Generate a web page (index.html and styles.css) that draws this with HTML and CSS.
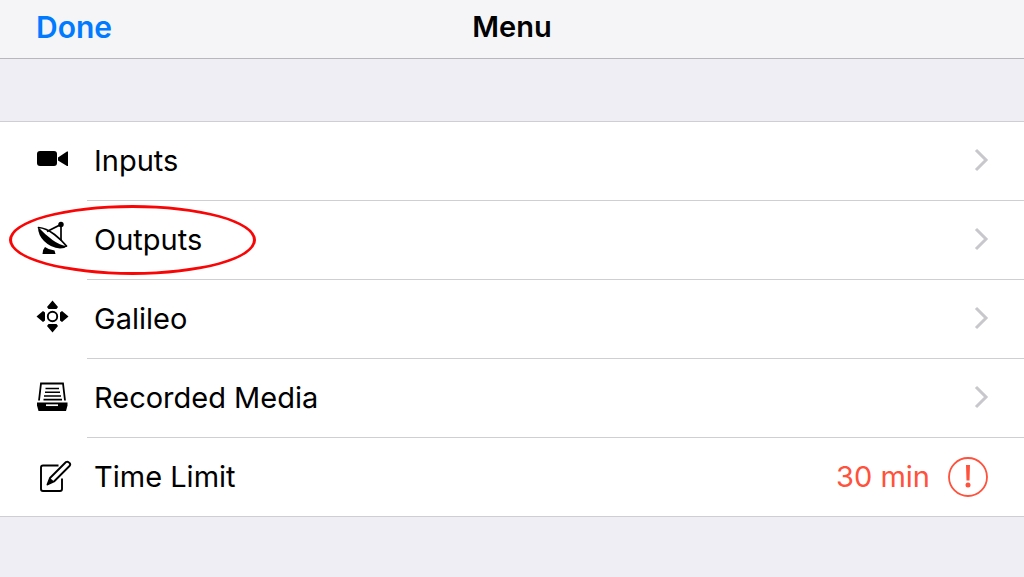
FILE: index.html
```html
<!DOCTYPE html>
<html lang="en">
<head>
<meta charset="utf-8">
<meta name="viewport" content="width=device-width, initial-scale=1">
<title>Menu</title>
<link rel="stylesheet" href="styles.css">
</head>
<body>
<header class="navbar">
  <button class="done" type="button">Done</button>
  <h1 class="title">Menu</h1>
</header>
<main>
  <ul class="menu">
    <li class="item">
      <a class="row" href="#inputs">
        <svg class="icon" viewBox="0 0 36 36" aria-hidden="true"><rect x="1" y="10" width="20" height="15" rx="3"/><path d="M22 16.500L31 10.500H32V25H31L22 19.500Z"/></svg>
        <span class="label">Inputs</span>
        <svg class="chevron" viewBox="0 0 16 24" aria-hidden="true"><path d="M2 2L12 12L2 22"/></svg>
      </a>
    </li>
    <li class="item marked">
      <a class="row" href="#outputs">
        <svg class="icon" viewBox="0 0 36 36" aria-hidden="true"><path d="M2 7Q2 15 8 21Q15 28 24 28.500Q29 28.500 31 26Q24 25.500 16.500 20Q9 14.500 2 7Z"/><path d="M2.500 7.500Q10 8 18.500 14.500Q25 19.500 30.500 26" fill="none" stroke="#000" stroke-width="1.700" stroke-linecap="round"/><path d="M11 11.500L25 4.500V20.500" fill="none" stroke="#000" stroke-width="1.700"/><circle cx="25" cy="4.500" r="2.700"/><path d="M9 27Q13 30 18.500 30.500L19.500 34H6.500Q6.500 29.500 9 27Z"/></svg>
        <span class="label">Outputs</span>
        <svg class="chevron" viewBox="0 0 16 24" aria-hidden="true"><path d="M2 2L12 12L2 22"/></svg>
      </a>
    </li>
    <li class="item">
      <a class="row" href="#galileo">
        <svg class="icon" viewBox="0 -1 36 36" aria-hidden="true"><circle cx="16.500" cy="16.500" r="4.700" fill="none" stroke="#000" stroke-width="1.900"/><path d="M16.500 .5L22 7L20.500 9H12.500L11 7ZM16.500 32.500L22 26L20.500 24H12.500L11 26ZM.5 16.500L7 11L9 12.500V20.500L7 22ZM32.500 16.500L26 11L24 12.500V20.500L26 22Z"/></svg>
        <span class="label">Galileo</span>
        <svg class="chevron" viewBox="0 0 16 24" aria-hidden="true"><path d="M2 2L12 12L2 22"/></svg>
      </a>
    </li>
    <li class="item">
      <a class="row" href="#media">
        <svg class="icon" viewBox="0 -2 36 36" aria-hidden="true"><path d="M3 20.500L5 3.500H27L29 20.500" fill="none" stroke="#000" stroke-width="1.800"/><path d="M9.500 8.500H23M9 12.200H24M8 16H25M7.500 19.600H26" stroke="#000" stroke-width="1.600"/><path d="M1 22.500H31.500V25.500L30 31H2.500L1 25.500Z"/><path d="M10 25.200H22" stroke="#fff" stroke-width="1.700"/></svg>
        <span class="label">Recorded Media</span>
        <svg class="chevron" viewBox="0 0 16 24" aria-hidden="true"><path d="M2 2L12 12L2 22"/></svg>
      </a>
    </li>
    <li class="item">
      <a class="row" href="#limit">
        <svg class="icon" viewBox="0 -2 36 36" aria-hidden="true"><g fill="none" stroke="#000" stroke-width="1.900" stroke-linejoin="round"><path d="M22.500 6.500H7Q5 6.500 5 8.500V30Q5 32 7 32H24Q26 32 26 30V19.500"/><path d="M11.500 25.500L14 19L30 3Q32 2 33.500 4Q35 5.500 33.500 7L18 22.500Z"/></g><path d="M11 26L14 19L18 22.500Z"/></svg>
        <span class="label">Time Limit</span>
        <span class="value">30 min</span>
        <svg class="alert" viewBox="0 0 40 40" role="img" aria-label="Alert"><circle cx="20" cy="20" r="19" fill="none" stroke="#ff513b" stroke-width="1.800"/><path d="M18 8H22L21.500 23.500H18.500Z"/><circle cx="20" cy="28" r="2.500"/></svg>
      </a>
    </li>
  </ul>
</main>
</body>
</html>
```
FILE: styles.css
```css
*,
*::before,
*::after {
  box-sizing: border-box;
}

body {
  margin: 0;
  background: #efeef4;
  color: #000;
  font-family: Inter, "Liberation Sans", sans-serif;
}

.navbar {
  display: grid;
  grid-template-columns: 1fr auto 1fr;
  align-items: center;
  height: 59px;
  padding: 0 36px 4px;
  background: #f5f5f7;
  border-bottom: 1px solid #b8b8bc;
}

.done {
  justify-self: start;
  padding: 0;
  border: 0;
  background: none;
  color: #007aff;
  font: 600 30px/36px Inter, "Liberation Sans", sans-serif;
}

.title {
  margin: 0;
  font-size: 29px;
  line-height: 36px;
  font-weight: 600;
}

.menu {
  margin: 62px 0 0;
  padding: 0;
  list-style: none;
  background: #fff;
  border-top: 1px solid #cfced3;
  border-bottom: 1px solid #cfced3;
}

.item {
  position: relative;
}

.row {
  display: flex;
  align-items: center;
  height: 78px;
  padding: 0 36px;
  color: inherit;
  text-decoration: none;
}

.item + .item::before {
  content: "";
  display: block;
  height: 1px;
  margin-left: 87px;
  background: #cfced3;
}

.icon {
  width: 36px;
  height: 36px;
  margin-right: 22px;
  margin-bottom: 4px;
}

.label {
  flex: 1;
  font-size: 29px;
  line-height: 36px;
}

.chevron {
  width: 16px;
  height: 24px;
  margin-right: -2px;
  margin-bottom: 2px;
  fill: none;
  stroke: #c7c7cc;
  stroke-width: 3;
}

.value {
  color: #ff513b;
  font-size: 29px;
  line-height: 36px;
}

.alert {
  width: 40px;
  height: 40px;
  margin-left: 18px;
  fill: #ff513b;
}

.marked::after {
  content: "";
  position: absolute;
  top: 5px;
  left: 9px;
  width: 247px;
  height: 70px;
  border: 3px solid #fa0505;
  border-radius: 50%;
  pointer-events: none;
}
```
